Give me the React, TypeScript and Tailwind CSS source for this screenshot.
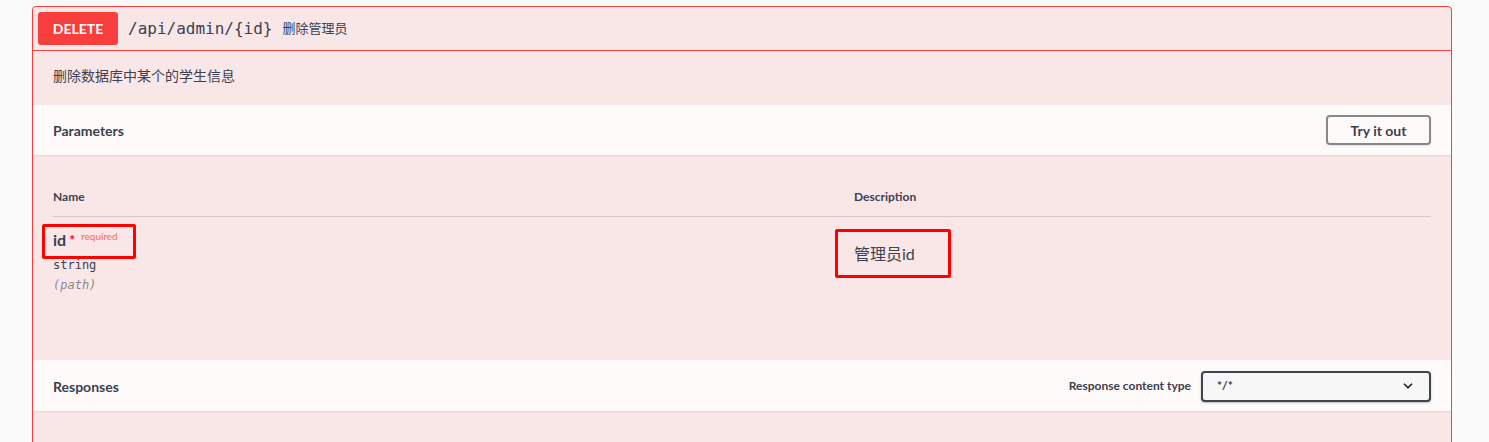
import { ChevronDown } from "lucide-react";

const sans = "font-['Lato','Noto_Sans_CJK_SC',sans-serif]";
const mono = "font-['DejaVu_Sans_Mono','Noto_Sans_CJK_SC',monospace]";

const App = () => {
  return (
    <div className={`relative h-[442px] w-[1489px] overflow-hidden bg-[#fafafa] pt-[6px] pl-[32px] text-[#3b4151] ${sans}`}>
      {/* Operation block */}
      <div className="h-[460px] w-[1420px] rounded-[4px] border border-[#f93e3e] bg-[#f9e7e7] overflow-hidden">
        {/* Summary */}
        <div className="flex h-[44px] items-center border-b border-[#f93e3e] px-[5px]">
          <span className="flex h-[33px] w-[80px] items-center justify-center rounded-[3px] bg-[#f93e3e] text-[14px] font-bold text-white">
            DELETE
          </span>
          <span className={`ml-[10px] text-[16px] font-normal text-[#3b4151] ${mono}`}>/api/admin/{"{id}"}</span>
          <span className="ml-[10px] text-[13px]">删除管理员</span>
        </div>

        {/* Description */}
        <div className="flex h-[54px] items-center px-[20px] pb-[6px] text-[14px]">
          删除数据库中某个的学生信息
        </div>

        {/* Parameters header */}
        <div className="flex h-[50px] items-center justify-between bg-[#fefaf9] px-[20px] shadow-[0_1px_2px_rgba(0,0,0,0.1)]">
          <h4 className="text-[14px] font-bold">Parameters</h4>
          <button className="h-[30px] w-[105px] rounded-[4px] border-2 border-[#888] text-[14px] font-bold text-[#3b4151] shadow-[0_1px_2px_rgba(0,0,0,0.1)]">
            Try it out
          </button>
        </div>

        {/* Parameters table */}
        <div className="h-[205px] px-[20px] pt-[33px]">
          <div className="flex h-[29px] items-start border-b border-[#d5c9cb] text-[12px] font-bold">
            <div className="w-[801px]">Name</div>
            <div>Description</div>
          </div>
          <div className="flex pt-[13px]">
            <div className="w-[801px]">
              <div className="flex items-start">
                <span className="text-[16px] font-bold leading-[20px]">id</span>
                <span className="ml-[3px] text-[14px] font-bold leading-[20px] text-[#ff0000]">*</span>
                <span className="ml-[6px] -mt-[4px] text-[10px] leading-[20px] text-[#ff0000]/60">required</span>
              </div>
              <div className={`mt-[5px] text-[12px] leading-[20px] ${mono}`}>string</div>
              <div className={`text-[12px] italic leading-[20px] text-[#3b4151]/60 ${mono}`}>(path)</div>
            </div>
            <div className="pt-[14px] text-[16px] leading-[20px]">管理员id</div>
          </div>
        </div>

        {/* Responses header */}
        <div className="flex h-[51px] items-center justify-between bg-[#fefaf9] px-[20px] pt-[1px] shadow-[0_1px_2px_rgba(0,0,0,0.1)]">
          <h4 className="text-[14px] font-bold">Responses</h4>
          <div className="flex items-center">
            <span className="mr-[10px] text-[12px] font-bold">Response content type</span>
            <div className="flex h-[31px] w-[230px] items-center justify-between rounded-[4px] border-2 border-[#41444e] bg-[#f7f7f7] pl-[14px] pr-[14px] shadow-[0_1px_2px_rgba(0,0,0,0.25)]">
              <span className="text-[12px] font-bold">*/*</span>
              <ChevronDown size={14} strokeWidth={3} className="text-[#222]" />
            </div>
          </div>
        </div>
      </div>

      {/* Annotation boxes */}
      <div className="absolute left-[42px] top-[224px] h-[35px] w-[94px] rounded-[2px] border-[3px] border-[#ff0000]" />
      <div className="absolute left-[835px] top-[229px] h-[49px] w-[116px] rounded-[2px] border-[3px] border-[#ff0000]" />
    </div>
  );
};

export default App;
